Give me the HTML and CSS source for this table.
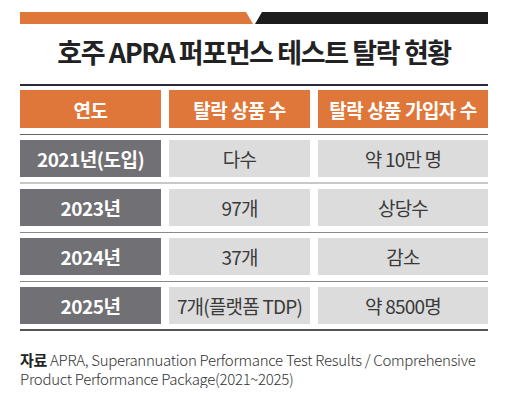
FILE: index.html
```html
<!DOCTYPE html>
<html>
<head>
  <meta charset="utf-8">
  <title>호주 APRA 퍼포먼스 테스트 탈락 현황</title>
  <link rel="stylesheet" href="styles.css">
</head>
<body>
  <div class="top-bar">
    <div class="bar-orange"></div>
    <div class="bar-black"></div>
  </div>

  <h1 class="title">호주 APRA 퍼포먼스 테스트 탈락 현황</h1>
  <div class="title-rule"></div>

  <div class="table">
    <div class="row head">
      <div class="cell">연도</div>
      <div class="cell">탈락 상품 수</div>
      <div class="cell">탈락 상품 가입자 수</div>
    </div>
    <div class="sep dark"></div>
    <div class="row">
      <div class="cell year">2021년(도입)</div>
      <div class="cell">다수</div>
      <div class="cell">약 10만 명</div>
    </div>
    <div class="sep light"></div>
    <div class="row">
      <div class="cell year">2023년</div>
      <div class="cell">97개</div>
      <div class="cell">상당수</div>
    </div>
    <div class="sep"></div>
    <div class="row">
      <div class="cell year">2024년</div>
      <div class="cell">37개</div>
      <div class="cell">감소</div>
    </div>
    <div class="sep"></div>
    <div class="row">
      <div class="cell year">2025년</div>
      <div class="cell">7개(플랫폼 TDP)</div>
      <div class="cell">약 8500명</div>
    </div>
  </div>
  <div class="bottom-rule"></div>

  <p class="source"><b>자료</b> APRA, Superannuation Performance Test Results / Comprehensive Product Performance Package(2021~2025)</p>
</body>
</html>
```

FILE: styles.css
```css
body {
  margin: 0;
  padding: 12px 21px 0 20px;
  background-color: white;
  font-family: "Noto Sans CJK KR", "Noto Sans", sans-serif;
  color: #333;
}
.top-bar {
  display: flex;
  gap: 2px;
  height: 12px;
}
.bar-orange {
  flex: 1;
  background-color: #e0773a;
  clip-path: polygon(0 0, calc(100% - 7px) 0, 100% 100%, 0 100%);
}
.bar-black {
  flex: 1;
  background-color: #1c1c1c;
  clip-path: polygon(7px 0, 100% 0, 100% 100%, 0 100%);
}
.title {
  margin: 0;
  padding-top: 10px;
  height: 50px;
  text-align: center;
  font-size: 27px;
  line-height: 36px;
  font-weight: bold;
  letter-spacing: -1.4px;
  color: #222;
}
.title-rule {
  height: 2px;
  background-color: #2a2a3c;
}
.table {
  padding-top: 4px;
}
.row {
  display: grid;
  grid-template-columns: 141px 141px 1fr;
  gap: 8px;
  height: 37px;
}
.row.head {
  height: 38px;
}
.cell {
  display: flex;
  align-items: center;
  justify-content: center;
  background-color: #dcdcdc;
  font-size: 19px;
  letter-spacing: -0.8px;
  color: #3a3a3a;
}
.head .cell {
  background-color: #e0773a;
  color: white;
  font-weight: bold;
  letter-spacing: -0.5px;
}
.cell.year {
  background-color: #707075;
  color: white;
  font-weight: bold;
  letter-spacing: -0.5px;
}
.sep {
  height: 12px;
  display: flex;
  align-items: center;
}
.sep::before {
  content: "";
  flex: 1;
  height: 1px;
  background-color: #8a8a8a;
}
.sep.dark::before {
  background-color: #666;
}
.sep.light::before {
  height: 2px;
  background-color: #c8c8c8;
}
.bottom-rule {
  margin-top: 5px;
  height: 2px;
  background-color: #555;
}
.source {
  margin: 19px 0 0;
  font-size: 15px;
  line-height: 19px;
  font-weight: 300;
  letter-spacing: -0.3px;
  color: #333;
}
.source b {
  font-weight: bold;
  color: #222;
}
```
